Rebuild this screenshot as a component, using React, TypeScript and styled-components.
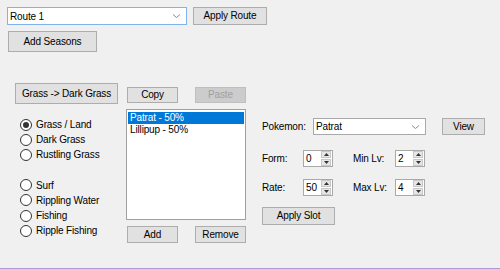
import type { FC } from "react";
import styled, { createGlobalStyle } from "styled-components";

const GlobalStyle = createGlobalStyle`
  html, body {
    margin: 0;
    padding: 0;
    background: #f0f0f0;
  }
  * {
    box-sizing: border-box;
  }
`;

const Window = styled.div`
  width: 500px;
  height: 269px;
  background: #f0f0f0;
  border-bottom: 1px solid #b09ad6;
  padding: 7px 0 0 7px;
  font-family: "Liberation Sans", Arial, sans-serif;
  font-size: 10px;
  letter-spacing: -0.15px;
  color: #000;
  overflow: hidden;
`;

const Row = styled.div<{ $gap?: number; $top?: number; $left?: number }>`
  display: flex;
  align-items: center;
  gap: ${(p) => p.$gap ?? 0}px;
  margin-top: ${(p) => p.$top ?? 0}px;
  margin-left: ${(p) => p.$left ?? 0}px;
`;

const Button = styled.button<{ $w: number; $h: number; $disabled?: boolean }>`
  width: ${(p) => p.$w}px;
  height: ${(p) => p.$h}px;
  padding: 0;
  border: 1px solid ${(p) => (p.$disabled ? "#bfbfbf" : "#adadad")};
  background: ${(p) => (p.$disabled ? "#cccccc" : "#e1e1e1")};
  color: ${(p) => (p.$disabled ? "#a0a0a0" : "#000")};
  font-family: inherit;
  font-size: inherit;
  letter-spacing: inherit;
  line-height: 1;
  white-space: nowrap;
  flex-shrink: 0;
`;

const Combo = styled.div<{ $w: number; $h: number; $focus?: boolean }>`
  width: ${(p) => p.$w}px;
  height: ${(p) => p.$h}px;
  background: #fff;
  border: 1px solid ${(p) => (p.$focus ? "#7eb4ea" : "#a9a9a9")};
  display: flex;
  align-items: center;
  justify-content: space-between;
  padding: 0 5px 0 2px;
  flex-shrink: 0;
`;

const Main = styled.div`
  display: flex;
  align-items: flex-start;
  margin-top: 31px;
  margin-left: 8px;
`;

const LeftCol = styled.div`
  display: flex;
  flex-direction: column;
  width: 103px;
`;

const RadioGroup = styled.div<{ $top: number }>`
  display: flex;
  flex-direction: column;
  margin-top: ${(p) => p.$top}px;
  margin-left: 5px;
`;

const RadioRow = styled.div`
  display: flex;
  align-items: center;
  height: 15.2px;
  white-space: nowrap;
`;

const RadioCircle = styled.span<{ $checked?: boolean }>`
  width: 12px;
  height: 12px;
  border-radius: 50%;
  border: 1px solid #333;
  background: #fff;
  margin-right: 4px;
  display: flex;
  align-items: center;
  justify-content: center;
  &::after {
    content: "";
    display: ${(p) => (p.$checked ? "block" : "none")};
    width: 6px;
    height: 6px;
    border-radius: 50%;
    background: #333;
  }
`;

const MidCol = styled.div`
  display: flex;
  flex-direction: column;
  margin-left: 8px;
  width: 120px;
`;

const ListBox = styled.div`
  margin-top: 6px;
  width: 120px;
  height: 111px;
  background: #fff;
  border: 1px solid #a0a0a0;
  padding: 2px 1px;
`;

const ListItem = styled.div<{ $selected?: boolean }>`
  height: 12px;
  line-height: 12px;
  padding-left: 2px;
  background: ${(p) => (p.$selected ? "#0078d7" : "transparent")};
  color: ${(p) => (p.$selected ? "#fff" : "#000")};
`;

const RightCol = styled.div`
  display: flex;
  flex-direction: column;
  margin-left: 16px;
  margin-top: 35px;
`;

const Label = styled.span<{ $w: number }>`
  width: ${(p) => p.$w}px;
  flex-shrink: 0;
  white-space: nowrap;
`;

const FieldGrid = styled.div`
  display: grid;
  grid-template-columns: 41px 30px 20px 42px 30px;
  grid-auto-rows: 17px;
  row-gap: 12px;
  align-items: center;
  margin-top: 15px;
`;

const Spin = styled.div`
  width: 30px;
  height: 17px;
  background: #fff;
  border: 1px solid #a9a9a9;
  display: flex;
  align-items: center;
  justify-content: space-between;
  padding-left: 2px;
`;

const SpinButtons = styled.div`
  width: 11px;
  height: 15px;
  display: flex;
  flex-direction: column;
  gap: 1px;
  padding: 0 1px 0 0;
`;

const SpinBtn = styled.div`
  flex: 1;
  background: #e6e6e6;
  border: 1px solid #c8c8c8;
  display: flex;
  align-items: center;
  justify-content: center;
`;

const Chevron: FC = () => (
  <svg width="9" height="6" viewBox="0 0 9 6">
    <path d="M1 1.5 L4.5 4.5 L8 1.5" fill="none" stroke="#8a8a8a" strokeWidth="1" />
  </svg>
);

const Arrow: FC<{ up?: boolean }> = ({ up }) => (
  <svg width="5" height="3" viewBox="0 0 5 3">
    <path d={up ? "M0 3 L2.5 0 L5 3 Z" : "M0 0 L2.5 3 L5 0 Z"} fill="#333" />
  </svg>
);

const SpinBox: FC<{ value: string }> = ({ value }) => (
  <Spin>
    <span>{value}</span>
    <SpinButtons>
      <SpinBtn>
        <Arrow up />
      </SpinBtn>
      <SpinBtn>
        <Arrow />
      </SpinBtn>
    </SpinButtons>
  </Spin>
);

const Radio: FC<{ label: string; checked?: boolean }> = ({ label, checked }) => (
  <RadioRow>
    <RadioCircle $checked={checked} />
    {label}
  </RadioRow>
);

const App: FC = () => {
  return (
    <>
      <GlobalStyle />
      <Window>
        <Row $gap={6}>
          <Combo $w={180} $h={18} $focus>
            <span>Route 1</span>
            <Chevron />
          </Combo>
          <Button $w={74} $h={18}>Apply Route</Button>
        </Row>
        <Row $top={6} $left={1}>
          <Button $w={89} $h={21}>Add Seasons</Button>
        </Row>
        <Main>
          <LeftCol>
            <Button $w={103} $h={21}>Grass -&gt; Dark Grass</Button>
            <RadioGroup $top={13}>
              <Radio label="Grass / Land" checked />
              <Radio label="Dark Grass" />
              <Radio label="Rustling Grass" />
            </RadioGroup>
            <RadioGroup $top={15}>
              <Radio label="Surf" />
              <Radio label="Rippling Water" />
              <Radio label="Fishing" />
              <Radio label="Ripple Fishing" />
            </RadioGroup>
          </LeftCol>
          <MidCol>
            <Row $top={4} $left={1} $gap={17}>
              <Button $w={51} $h={16}>Copy</Button>
              <Button $w={51} $h={16} $disabled>Paste</Button>
            </Row>
            <ListBox>
              <ListItem $selected>Patrat - 50%</ListItem>
              <ListItem>Lillipup - 50%</ListItem>
            </ListBox>
            <Row $top={6} $left={1} $gap={17}>
              <Button $w={51} $h={17}>Add</Button>
              <Button $w={51} $h={17}>Remove</Button>
            </Row>
          </MidCol>
          <RightCol>
            <Row>
              <Label $w={51}>Pokemon:</Label>
              <Combo $w={113} $h={17}>
                <span>Patrat</span>
                <Chevron />
              </Combo>
              <Row $left={16}>
                <Button $w={43} $h={17}>View</Button>
              </Row>
            </Row>
            <FieldGrid>
              <span>Form:</span>
              <SpinBox value="0" />
              <span />
              <span>Min Lv:</span>
              <SpinBox value="2" />
              <span>Rate:</span>
              <SpinBox value="50" />
              <span />
              <span>Max Lv:</span>
              <SpinBox value="4" />
            </FieldGrid>
            <Row $top={11}>
              <Button $w={73} $h={18}>Apply Slot</Button>
            </Row>
          </RightCol>
        </Main>
      </Window>
    </>
  );
};

export default App;
